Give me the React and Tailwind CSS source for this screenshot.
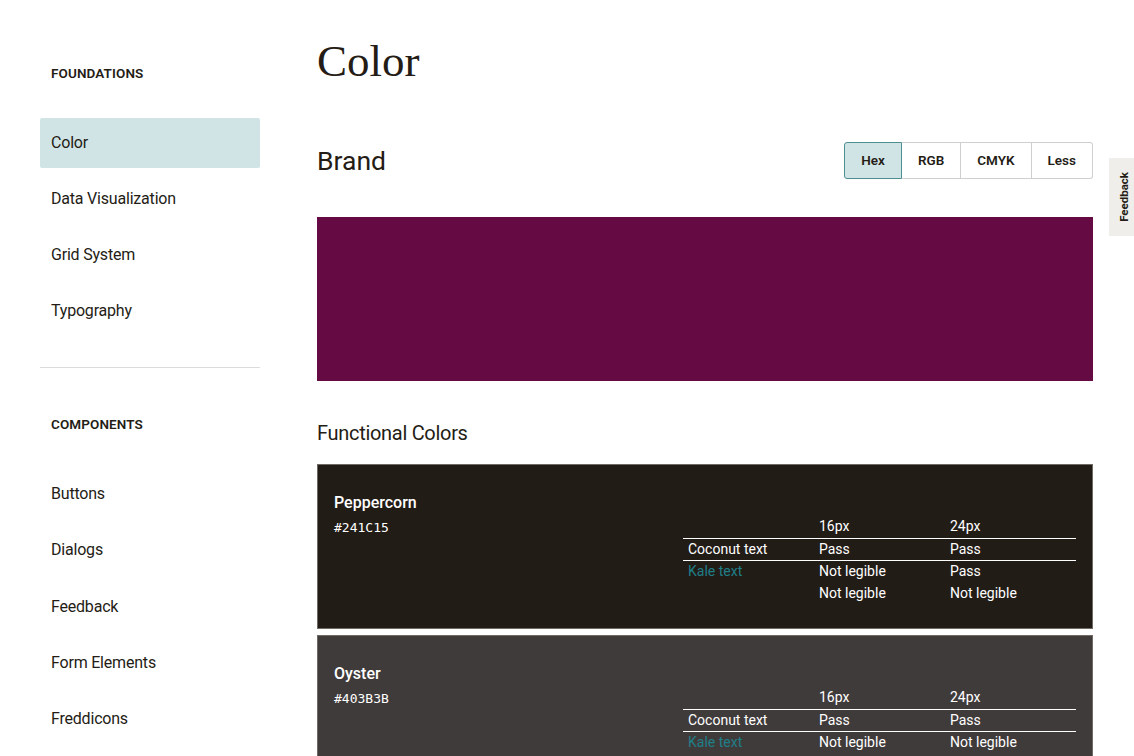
import React from "react";

const sans = { fontFamily: "Roboto, 'Liberation Sans', sans-serif" };

function NavItem({ label, active }) {
  return (
    <div
      className={
        "h-[50px] flex items-center px-[11px] rounded-[2px] text-[16px] tracking-[-0.2px] text-[#241c15] " +
        (active ? "bg-[#d0e4e6]" : "")
      }
    >
      {label}
    </div>
  );
}

function SectionHead({ children }) {
  return (
    <div className="px-[11px] h-[16px] leading-[16px] text-[13.5px] font-semibold text-[#241c15] tracking-[0.1px]">
      {children}
    </div>
  );
}

function ColorCard({ name, hex, bg, rows }) {
  return (
    <div
      className="flex justify-between pt-[26px] pb-[24px] pl-[16px] pr-[16px] border border-[#6f6a66]"
      style={{ backgroundColor: bg }}
    >
      <div className="text-white">
        <div className="text-[16px] leading-[24px] font-medium">{name}</div>
        <div
          className="text-[13px] leading-[20px] mt-[3px]"
          style={{ fontFamily: "'DejaVu Sans Mono', 'Liberation Mono', monospace" }}
        >
          {hex}
        </div>
      </div>
      <table className="w-[393px] mt-[24px] text-[14px] text-white border-collapse self-start">
        <tbody>
          <tr className="border-b border-white h-[23px]">
            <td className="w-[131px] px-[5px]"></td>
            <td className="w-[131px] px-[5px]">16px</td>
            <td className="px-[5px]">24px</td>
          </tr>
          {rows.map((r, i) => (
            <tr
              key={i}
              className={"h-[22px] " + (i === 0 ? "border-b border-white" : "")}
            >
              <td className={"px-[5px] " + (r[0] === "Kale text" ? "text-[#1f7f88]" : "")}>
                {r[0]}
              </td>
              <td className="px-[5px]">{r[1]}</td>
              <td className="px-[5px]">{r[2]}</td>
            </tr>
          ))}
        </tbody>
      </table>
    </div>
  );
}

export default function App() {
  return (
    <div
      className="relative w-[1134px] h-[756px] overflow-hidden bg-white text-[#241c15]"
      style={sans}
    >
      <div className="flex">
        <aside className="ml-[40px] w-[220px] shrink-0 pt-[65px]">
          <SectionHead>FOUNDATIONS</SectionHead>
          <div className="mt-[37px] flex flex-col gap-[6px]">
            <NavItem label="Color" active />
            <NavItem label="Data Visualization" />
            <NavItem label="Grid System" />
            <NavItem label="Typography" />
          </div>
          <div className="mt-[31px] h-px bg-[#dcdcdc]" />
          <div className="mt-[48px]">
            <SectionHead>COMPONENTS</SectionHead>
          </div>
          <div className="mt-[37px] flex flex-col gap-[6.25px]">
            <NavItem label="Buttons" />
            <NavItem label="Dialogs" />
            <NavItem label="Feedback" />
            <NavItem label="Form Elements" />
            <NavItem label="Freddicons" />
          </div>
        </aside>

        <main className="ml-[57px] w-[776px] pt-[39px]">
          <h1
            className="text-[45px] leading-none text-[#241c15]"
            style={{ fontFamily: "'Liberation Serif', 'DejaVu Serif', serif" }}
          >
            Color
          </h1>

          <div className="mt-[58px] flex items-center justify-between">
            <h2 className="text-[26.5px] leading-[32px] text-[#241c15]">Brand</h2>
            <div className="flex h-[37px] text-[13.5px] font-semibold text-[#241c15]">
              <button className="px-[16px] bg-[#d0e4e6] border border-[#4f8f94] rounded-l-[3px]">
                Hex
              </button>
              <button className="px-[16px] border-y border-r border-[#cfcfcf]">RGB</button>
              <button className="px-[16px] border-y border-r border-[#cfcfcf]">CMYK</button>
              <button className="px-[16px] border-y border-r border-[#cfcfcf] rounded-r-[3px]">
                Less
              </button>
            </div>
          </div>

          <div className="mt-[38px] h-[164px] bg-[#650a43]" />

          <h3 className="mt-[38px] text-[20px] leading-[28px] tracking-[-0.3px] text-[#241c15]">
            Functional Colors
          </h3>

          <div className="mt-[17px] flex flex-col gap-[6px]">
            <ColorCard
              name="Peppercorn"
              hex="#241C15"
              bg="#221c17"
              rows={[
                ["Coconut text", "Pass", "Pass"],
                ["Kale text", "Not legible", "Pass"],
                ["", "Not legible", "Not legible"],
              ]}
            />
            <ColorCard
              name="Oyster"
              hex="#403B3B"
              bg="#403b3b"
              rows={[
                ["Coconut text", "Pass", "Pass"],
                ["Kale text", "Not legible", "Not legible"],
              ]}
            />
          </div>
        </main>
      </div>

      <div className="absolute right-0 top-[158px] w-[25px] h-[78px] bg-[#efeeea] flex items-center pl-[9px]">
        <span className="text-[11.5px] leading-[12px] font-bold text-[#241c15] [writing-mode:vertical-rl] rotate-180">
          Feedback
        </span>
      </div>
    </div>
  );
}
